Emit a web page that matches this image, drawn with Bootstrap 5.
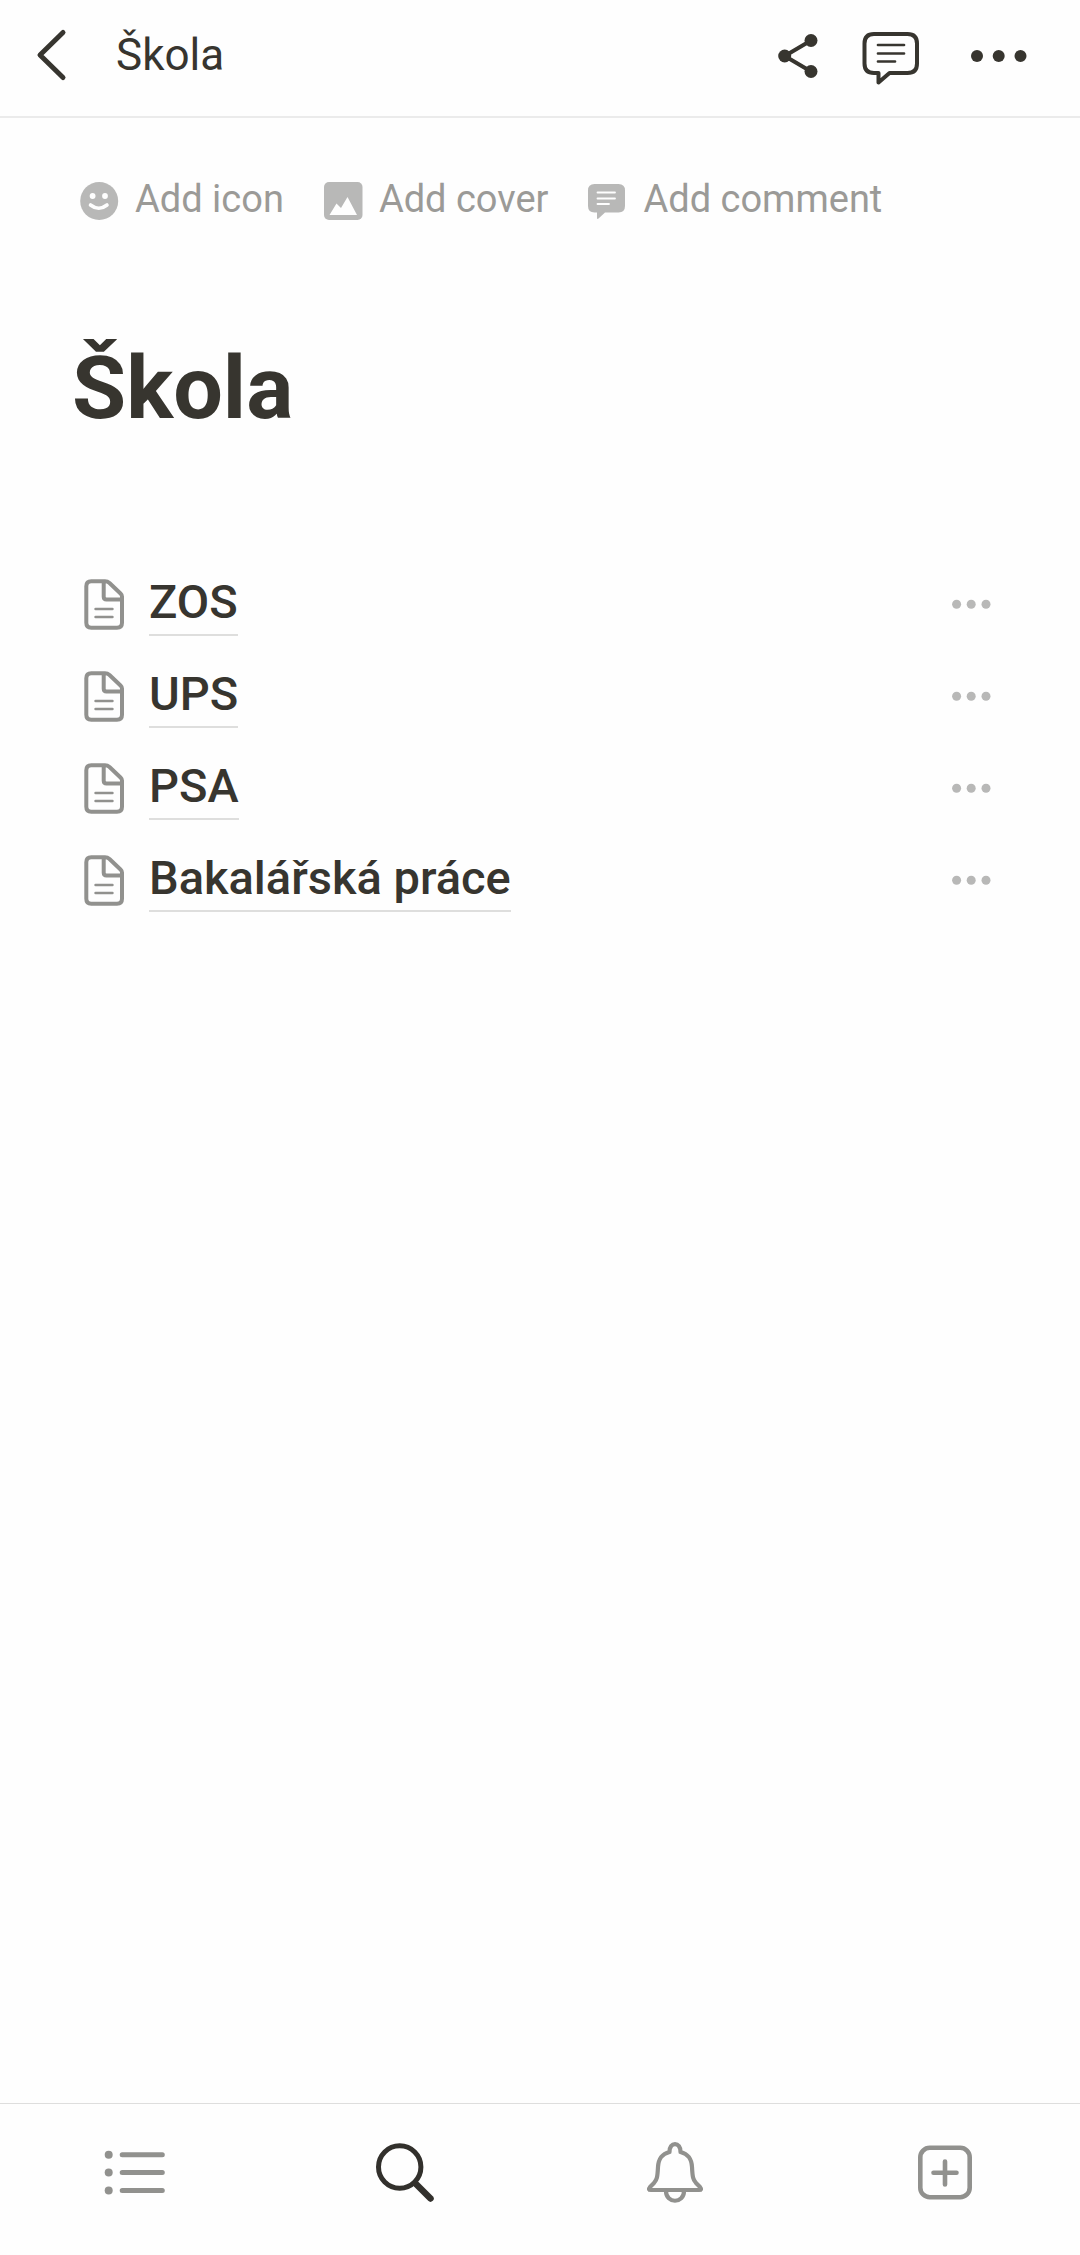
<!DOCTYPE html>
<html lang="cs">
<head>
<meta charset="utf-8">
<meta name="viewport" content="width=device-width, initial-scale=1">
<title>Škola</title>
<link href="https://cdn.jsdelivr.net/npm/bootstrap@5.3.0/dist/css/bootstrap.min.css" rel="stylesheet">
<script src="https://cdn.jsdelivr.net/npm/bootstrap@5.3.0/dist/js/bootstrap.bundle.min.js"></script>
<style>
  body { font-family: Roboto, "Liberation Sans", sans-serif; color: #37352f; background: #fefefe; }
  svg { display: block; flex: none; }
  .plain-btn { border: 0; padding: 0; background: none; color: inherit; }
  .top-bar { padding: 20px 50px 24px 16px; border-bottom: 2px solid #ebebeb; }
  .top-title { font-size: 44px; line-height: 68px; padding-bottom: 2px; margin-left: 28px; }
  .top-actions { gap: 36px; }
  .page-body { padding: 53px 72px 0; }
  .add-row { padding-left: 8px; gap: 40px; }
  .add-btn { gap: 16px; font-size: 38px; line-height: 56px; color: #9b9a97; }
  .add-btn svg { color: #b8b8b7; }
  .page-title { font-size: 88px; line-height: 104px; font-weight: 700; margin: 109px 0 120px; }
  .page-list li { height: 92px; padding: 0 8px; }
  .doc-icon { color: #91918e; margin-right: 19px; }
  .doc-link { font-size: 47px; line-height: 54px; font-weight: 500; color: inherit; margin-bottom: 2px; padding-bottom: 5px; border-bottom: 2px solid #dededd; }
  .row-menu { color: #b8b8b7; }
  .tab-bar { padding: 37px 0 50px; border-top: 1px solid #dededd; color: #91918e; }
  .tab-bar .current { color: #32302c; }
</style>
</head>
<body>
<div class="d-flex flex-column min-vh-100">
  <header class="top-bar d-flex align-items-center">
    <button type="button" class="plain-btn" aria-label="Back">
      <svg width="72" height="72" fill="none" stroke="currentColor" stroke-width="5" stroke-linecap="round" stroke-linejoin="round"><path d="M47 12.500L24 35L47 57.500"/></svg>
    </button>
    <div class="top-title">Škola</div>
    <div class="top-actions d-flex align-items-center ms-auto">
      <button type="button" class="plain-btn" aria-label="Share">
        <svg width="48" height="48" fill="currentColor"><path d="M37 8.500L10.700 24L37 39.500" fill="none" stroke="currentColor" stroke-width="4"/><circle cx="10.700" cy="24" r="6.500"/><circle cx="37" cy="8.500" r="6.500"/><circle cx="37" cy="39.500" r="6.500"/></svg>
      </button>
      <button type="button" class="plain-btn" aria-label="Comments">
        <svg width="64" height="64" fill="none" stroke="currentColor" stroke-linecap="round" stroke-linejoin="round"><path stroke-width="4" d="M16 10H49.500Q59 10 59 19.500V39.500Q59 49 49.500 49H31.500L20.500 58.500V49H16Q6.500 49 6.500 39.500V19.500Q6.500 10 16 10Z"/><path stroke-width="2.700" d="M20 21H46M20 29.500H46M20 37.500H37"/></svg>
      </button>
      <button type="button" class="plain-btn" aria-label="More">
        <svg width="72" height="64" fill="currentColor"><circle cx="19" cy="32" r="6"/><circle cx="40.700" cy="32" r="6"/><circle cx="62.500" cy="32" r="6"/></svg>
      </button>
    </div>
  </header>

  <main class="page-body flex-grow-1">
    <div class="add-row d-flex">
      <button type="button" class="plain-btn add-btn d-flex align-items-center">
        <svg width="39" height="42" fill="currentColor"><circle cx="19.200" cy="23" r="19"/><g fill="#fefefe"><circle cx="12.600" cy="18" r="2.900"/><circle cx="25" cy="18" r="2.900"/></g><path d="M10.500 27Q18.800 33.500 27 27" fill="none" stroke="#fefefe" stroke-width="3.600" stroke-linecap="round"/></svg>
        <span>Add icon</span>
      </button>
      <button type="button" class="plain-btn add-btn d-flex align-items-center">
        <svg width="39" height="42" fill="currentColor"><rect y="4" width="38.500" height="38" rx="5"/><path d="M5.500 37L12.500 25.500L17 30L23.500 19L33 37Z" fill="#fefefe"/></svg>
        <span>Add cover</span>
      </button>
      <button type="button" class="plain-btn add-btn d-flex align-items-center">
        <svg width="39" height="42"><path fill="currentColor" d="M6.500 6H30.500Q37 6 37 12.500V28Q37 34.500 30.500 34.500H17L10.500 40.500Q9 41.500 9 40V34.500H6.500Q0 34.500 0 28V12.500Q0 6 6.500 6Z"/><path stroke="#fefefe" stroke-width="1.800" stroke-linecap="round" d="M9.500 14.500H27M9.500 20.500H27M9.500 26H21"/></svg>
        <span>Add comment</span>
      </button>
    </div>

    <h1 class="page-title">Škola</h1>

    <svg width="0" height="0" class="d-none">
      <symbol id="doc" viewBox="0 0 50 56"><g fill="none" stroke="currentColor" stroke-linecap="round" stroke-linejoin="round"><path stroke-width="4" d="M25 3.300H11.300Q6.300 3.300 6.300 8.300V44.700Q6.300 49.700 11.300 49.700H37Q42 49.700 42 44.700V18.500Q42 17 40.500 15.500L29.500 5Q27.500 3.300 25 3.300ZM23.700 4V18.700Q23.700 21.500 26.500 21.500H41"/><path stroke-width="2.400" d="M15.500 31H32.500M15.500 39H32.500"/></g></symbol>
      <symbol id="dots" viewBox="0 0 56 56"><g fill="currentColor"><circle cx="12.600" cy="26.300" r="4.500"/><circle cx="27.200" cy="26.300" r="4.500"/><circle cx="42" cy="26.300" r="4.500"/></g></symbol>
    </svg>
    <ul class="page-list list-unstyled mb-0">
      <li class="d-flex align-items-center"><svg class="doc-icon" width="50" height="56"><use href="#doc"/></svg><a href="#" class="doc-link text-decoration-none">ZOS</a><button type="button" class="plain-btn row-menu ms-auto" aria-label="ZOS menu"><svg width="56" height="56"><use href="#dots"/></svg></button></li>
      <li class="d-flex align-items-center"><svg class="doc-icon" width="50" height="56"><use href="#doc"/></svg><a href="#" class="doc-link text-decoration-none">UPS</a><button type="button" class="plain-btn row-menu ms-auto" aria-label="UPS menu"><svg width="56" height="56"><use href="#dots"/></svg></button></li>
      <li class="d-flex align-items-center"><svg class="doc-icon" width="50" height="56"><use href="#doc"/></svg><a href="#" class="doc-link text-decoration-none">PSA</a><button type="button" class="plain-btn row-menu ms-auto" aria-label="PSA menu"><svg width="56" height="56"><use href="#dots"/></svg></button></li>
      <li class="d-flex align-items-center"><svg class="doc-icon" width="50" height="56"><use href="#doc"/></svg><a href="#" class="doc-link text-decoration-none">Bakalářská práce</a><button type="button" class="plain-btn row-menu ms-auto" aria-label="Bakalářská práce menu"><svg width="56" height="56"><use href="#dots"/></svg></button></li>
    </ul>
  </main>

  <nav class="tab-bar d-flex">
    <button type="button" class="plain-btn flex-fill d-flex justify-content-center" aria-label="Pages">
      <svg width="64" height="64" fill="currentColor"><circle cx="5.700" cy="13.700" r="4"/><circle cx="5.700" cy="31.500" r="4"/><circle cx="5.700" cy="49.500" r="4"/><path stroke="currentColor" stroke-width="5" stroke-linecap="round" d="M19.200 13.700H59.300M19.200 31.500H59.300M19.200 49.500H59.300"/></svg>
    </button>
    <button type="button" class="plain-btn current flex-fill d-flex justify-content-center" aria-label="Search">
      <svg width="64" height="64" fill="none" stroke="currentColor" stroke-linecap="round"><circle cx="26.700" cy="26" r="21.200" stroke-width="5"/><path stroke-width="6.500" d="M43 43L57.500 57.500"/></svg>
    </button>
    <button type="button" class="plain-btn flex-fill d-flex justify-content-center" aria-label="Notifications">
      <svg width="64" height="64" fill="none" stroke="currentColor" stroke-width="4.200" stroke-linecap="round" stroke-linejoin="round"><path d="M26.500 11C26 0.500 38 0.500 37.500 11C45 13 48.500 17 49 26C49.500 36 50 38.500 53 42L57 46Q59.500 49 56 49H8Q4.500 49 7 46L11 42C14 38.500 14.500 36 15 26C15.500 17 19 13 26.500 11Z"/><path d="M23 50C23 63 41 63 41 50"/></svg>
    </button>
    <button type="button" class="plain-btn flex-fill d-flex justify-content-center" aria-label="New page">
      <svg width="64" height="64" fill="none" stroke="currentColor" stroke-width="4.600" stroke-linecap="round"><rect x="7.300" y="6.800" width="49.400" height="49.400" rx="9.500"/><path d="M32 20.500V43.500M20.500 31.800H43.500"/></svg>
    </button>
  </nav>
</div>
</body>
</html>
